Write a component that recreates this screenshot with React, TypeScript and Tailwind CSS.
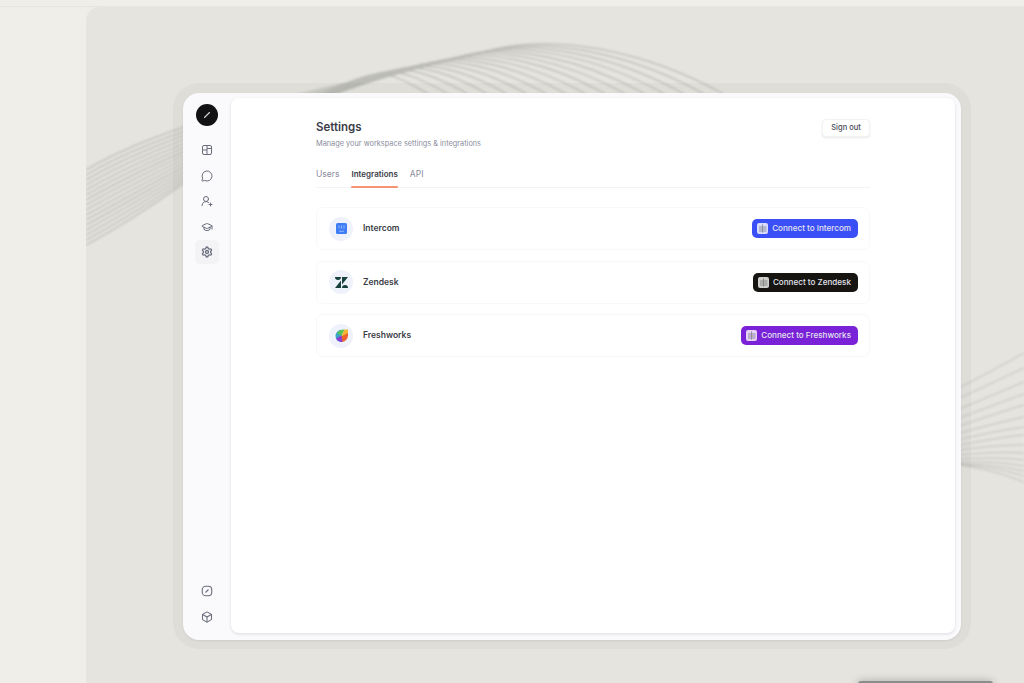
import { Box, GraduationCap, MessageCircle, Settings, UserRoundPlus } from "lucide-react";

const left = Array.from({ length: 16 }, (_, i) => {
  const t = i / 15;
  const y0 = 245 - 75 * t;
  const ex = 370 + 130 * t;
  const ey = 75 - 27 * t;
  const dx = 425 + 295 * t;
  const a = 20 + 40 * t;
  const dist = dx - ex;
  const x4 = dx - 0.35 * dist;
  const y4 = 92 - 0.19 * dist;
  return `M86 ${y0} C 190 ${y0 - 55 - 8 * t}, ${ex - 90} ${ey + 24}, ${ex} ${ey} C ${ex + a} ${ey - 0.2 * a}, ${x4} ${y4}, ${dx} 92 L ${dx + 10} 100`;
});

const rightA = [385, 395, 406, 415, 423, 430, 436, 442, 446, 451, 455, 458, 460, 460, 460];
const rightB = [353, 368, 382, 394, 405, 417, 427, 435, 445, 453, 460, 466, 471, 476, 482];
const right = rightA.map((a, i) => `M930 ${a + 18 - i * 1.2} Q 990 ${(a + rightB[i]) / 2 + 3 - i * 0.5}, 1024 ${rightB[i]}`);

function Wave() {
  return (
    <svg className="absolute left-0 top-0 [filter:blur(0.8px)]" width="938" height="676" viewBox="86 7 938 676" fill="none">
      {left.map((d) => (
        <path key={d} d={d} stroke="#bcbcb6" strokeWidth="1.2" />
      ))}
      {right.map((d) => (
        <path key={d} d={d} stroke="#c2c2bd" strokeWidth="1" />
      ))}
    </svg>
  );
}

function NavIcon({ children, active }: { children: React.ReactNode; active?: boolean }) {
  return (
    <div className={`flex h-6 w-6 items-center justify-center rounded-[5px] text-[#6a6d7c] ${active ? "bg-[#f3f3f6]" : ""}`}>{children}</div>
  );
}

function PanelIcon() {
  return (
    <svg width="12" height="12" viewBox="0 0 24 24" fill="none" stroke="currentColor" strokeWidth="2">
      <rect x="3" y="3" width="18" height="18" rx="3" />
      <path d="M12 3V21M3 12H12M12 9H21" />
    </svg>
  );
}

function SquareCompass() {
  return (
    <svg width="12" height="12" viewBox="0 0 24 24" fill="none" stroke="currentColor" strokeWidth="2.2">
      <rect x="2.5" y="2.5" width="19" height="19" rx="7" />
      <path d="M9 15 15 9" />
    </svg>
  );
}

function PlugIcon() {
  return (
    <svg width="11" height="11" viewBox="0 0 11 11" className="shrink-0">
      <rect width="11" height="11" rx="2" fill="#ffffff" fillOpacity="0.8" />
      <path d="M5.5 1.5V9.5M2 4H5M2 6H5M2 8H5M6 4H9.5M6 6H9.5M6 8H9.5" stroke="#333" strokeOpacity="0.5" strokeWidth="0.9" />
    </svg>
  );
}

function IntercomLogo() {
  return (
    <svg width="11" height="11" viewBox="0 0 11 11">
      <rect width="11" height="11" rx="1.5" fill="#3f7df6" />
      <path d="M3 2.5V5.5M5.5 2.5V5.5M8 2.5V5.5M3 8Q5.5 9.2 8 8" stroke="#ffffff" strokeOpacity="0.65" strokeWidth="0.7" fill="none" />
    </svg>
  );
}

function ZendeskLogo() {
  return (
    <svg width="13" height="11" viewBox="0 0 13 11" fill="#17403f">
      <path d="M6 3.6V11H0L6 3.6Z" />
      <path d="M7 7.4V0H13L7 7.4Z" />
      <path d="M6 0A3 3 0 0 1 0 0H6Z" />
      <path d="M7 11A3 3 0 0 1 13 11H7Z" />
    </svg>
  );
}

function FreshworksLogo() {
  return (
    <svg width="13" height="13" viewBox="0 0 13 13">
      <path d="M6.5 13A6 6 0 0 1 .5 7C.5 4 3 1.5 6 .8L7 7Z" fill="#35a7c9" />
      <path d="M2 4C3.5 1.5 6.5.2 9.5.4L6.5 7Z" fill="#5bbf5a" />
      <path d="M9.5.4H13V4C12.8 7 10 7.5 6.5 7Z" fill="#f2b632" />
      <path d="M13 4V6.5A6.5 6.5 0 0 1 6.5 13L5.5 8Z" fill="#f0602f" />
      <path d="M1 9.5 6.5 6.5 7.5 13C5 13.2 2.3 12 1 9.5Z" fill="#8a3fd1" />
    </svg>
  );
}

function Row({ logo, name, label, color }: { logo: React.ReactNode; name: string; label: string; color: string }) {
  return (
    <div className="flex h-[43px] items-center justify-between rounded-[7px] border border-[#f8f8fa] pl-3 pr-[11px]">
      <div className="flex items-center gap-[10px]">
        <div className="flex h-6 w-6 items-center justify-center rounded-full bg-[#eff1fb]">{logo}</div>
        <span className="text-[8.5px] font-semibold text-[#3a3c46]">{name}</span>
      </div>
      <div className={`flex h-[19px] items-center gap-[4px] rounded-[5px] pl-[5px] pr-[7px] text-[8.1px] font-medium text-[#e4e4ee] ${color}`}>
        <PlugIcon />
        <span>{label}</span>
      </div>
    </div>
  );
}

export default function App() {
  return (
    <div className="relative flex h-[683px] w-[1024px] flex-col overflow-hidden bg-[#efede8] font-['Inter',sans-serif]">
      <div className="h-[7px] shrink-0 border-b border-[#e6e5e0] bg-[#f0eee9]" />
      <div className="flex flex-1">
        <div className="w-[86px] shrink-0 bg-[#efeee9]" />
        <div className="relative flex-1 overflow-hidden rounded-tl-[14px] bg-[#e5e4df] pl-[87px] pt-[76px]">
          <Wave />
          <div className="relative h-[566px] w-[798px] rounded-[26px] bg-[#00000007] p-[10px]">
            <div className="flex h-[547px] w-[778px] rounded-[16px] bg-[#fafafc] pb-[7px] pr-[6px] pt-[5px] shadow-[0_1px_2px_rgba(60,60,80,0.1)]">
              <aside className="flex w-[48px] shrink-0 flex-col items-center justify-between pb-[4px] pt-[6px]">
                <div className="flex flex-col items-center">
                  <div className="mb-3 flex h-[22px] w-[22px] items-center justify-center rounded-full bg-[#121214]">
                    <svg width="10" height="10" viewBox="0 0 10 10">
                      <path d="M2.5 7.5 7.5 2.5" stroke="#d8d8d8" strokeWidth="1.1" strokeLinecap="round" />
                    </svg>
                  </div>
                  <div className="flex flex-col gap-[1.5px]">
                    <NavIcon><PanelIcon /></NavIcon>
                    <NavIcon><MessageCircle size={12} strokeWidth={2} /></NavIcon>
                    <NavIcon><UserRoundPlus size={12} strokeWidth={2} /></NavIcon>
                    <NavIcon><GraduationCap size={12} strokeWidth={2} /></NavIcon>
                    <NavIcon active><Settings size={12} strokeWidth={2.6} /></NavIcon>
                  </div>
                </div>
                <div className="flex flex-col gap-[2px]">
                  <NavIcon><SquareCompass /></NavIcon>
                  <NavIcon><Box size={12} strokeWidth={2.1} /></NavIcon>
                </div>
              </aside>
              <main className="flex-1 rounded-[8px] bg-white pl-[85px] pt-[21px] shadow-[0_1px_3px_rgba(70,70,110,0.18)]">
                <div className="w-[554px]">
                  <div className="flex items-start justify-between">
                    <div>
                      <h1 className="mt-[1px] text-[11.5px] font-semibold leading-[14px] text-[#3c3e48]">Settings</h1>
                      <p className="mt-[4px] text-[7.35px] leading-[12px] text-[#8b8d9c]">Manage your workspace settings &amp; integrations</p>
                    </div>
                    <div className="flex h-[18px] w-[48px] items-center justify-center rounded-[4px] border border-[#f3f3f5] bg-white text-[7.5px] font-medium text-[#4a4c56] shadow-[0_1px_2px_rgba(30,30,50,0.1)]">Sign out</div>
                  </div>
                  <div className="mt-[17px] flex h-[21px] gap-[12px] border-b border-[#f3f3f5] text-[8.5px] leading-[12px]">
                    <span className="pt-[1px] text-[#8b8d9c]">Users</span>
                    <div className="flex h-[21px] flex-col justify-between pt-[1px] text-[8px] font-semibold text-[#3a3c46]">
                      <span>Integrations</span>
                      <div className="h-[2px] rounded-[1px] bg-[#f59573]" />
                    </div>
                    <span className="pt-[1px] text-[#8b8d9c]">API</span>
                  </div>
                  <div className="mt-[19px] flex flex-col gap-[10.5px]">
                    <Row logo={<IntercomLogo />} name="Intercom" label="Connect to Intercom" color="bg-[#3b4ff6]" />
                    <Row logo={<ZendeskLogo />} name="Zendesk" label="Connect to Zendesk" color="bg-[#171512]" />
                    <Row logo={<FreshworksLogo />} name="Freshworks" label="Connect to Freshworks" color="bg-[#7a22d8]" />
                  </div>
                </div>
              </main>
            </div>
          </div>
        </div>
      </div>
      <div className="absolute bottom-[-20px] left-[858px] h-[22px] w-[135px] rounded-[3px] bg-[#8c8c8a] shadow-[0_0_8px_rgba(0,0,0,0.25)]" />
    </div>
  );
}
